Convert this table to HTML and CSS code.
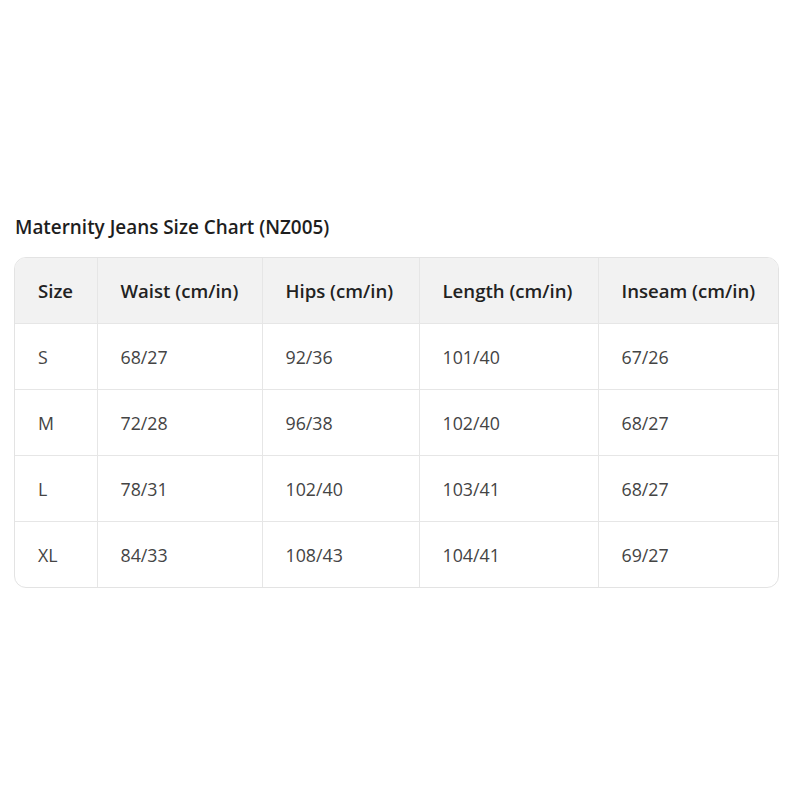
FILE: index.html
```html
<!DOCTYPE html>
<html>
<head>
<meta charset="utf-8">
<link rel="stylesheet" href="styles.css">
</head>
<body>
<div class="page">
  <h2 class="title">Maternity Jeans Size Chart (NZ005)</h2>
  <div class="chart">
    <table class="size-table">
      <colgroup>
        <col class="c-size">
        <col class="c-waist">
        <col class="c-hips">
        <col class="c-length">
        <col class="c-inseam">
      </colgroup>
      <thead>
        <tr><th>Size</th><th>Waist (cm/in)</th><th>Hips (cm/in)</th><th>Length (cm/in)</th><th>Inseam (cm/in)</th></tr>
      </thead>
      <tbody>
        <tr><td>S</td><td>68/27</td><td>92/36</td><td>101/40</td><td>67/26</td></tr>
        <tr><td>M</td><td>72/28</td><td>96/38</td><td>102/40</td><td>68/27</td></tr>
        <tr><td>L</td><td>78/31</td><td>102/40</td><td>103/41</td><td>68/27</td></tr>
        <tr><td>XL</td><td>84/33</td><td>108/43</td><td>104/41</td><td>69/27</td></tr>
      </tbody>
    </table>
  </div>
</div>
</body>
</html>
```
FILE: styles.css
```css
html, body {
  margin: 0;
  padding: 0;
  background: #ffffff;
}
body {
  font-family: "Open Sans", "Noto Sans", sans-serif;
  color: #222;
}
.page {
  padding: 214px 22px 0 14px;
}
.title {
  margin: 0 0 0 1px;
  font-size: 18.9px;
  font-weight: 600;
  color: #1e1e1e;
  line-height: 26px;
}
.chart {
  margin-top: 17px;
  width: 763px;
  border: 1px solid #e3e3e3;
  border-radius: 12px;
  overflow: hidden;
}
.size-table {
  width: 100%;
  border-collapse: collapse;
  table-layout: fixed;
}
.c-size { width: 82px; }
.c-waist { width: 165px; }
.c-hips { width: 157px; }
.c-length { width: 179px; }
.c-inseam { width: auto; }
.size-table th,
.size-table td {
  height: 65px;
  padding: 0 0 0 23px;
  text-align: left;
  border-right: 1px solid #e6e6e6;
  border-bottom: 1px solid #e6e6e6;
  font-size: 17.8px;
}
.size-table th:last-child,
.size-table td:last-child {
  border-right: none;
}
.size-table tbody tr:last-child td {
  border-bottom: none;
}
.size-table th {
  background: #f2f2f2;
  font-weight: 600;
  font-size: 18.6px;
  color: #222;
}
.size-table td {
  font-weight: 400;
  color: #444;
}
```
